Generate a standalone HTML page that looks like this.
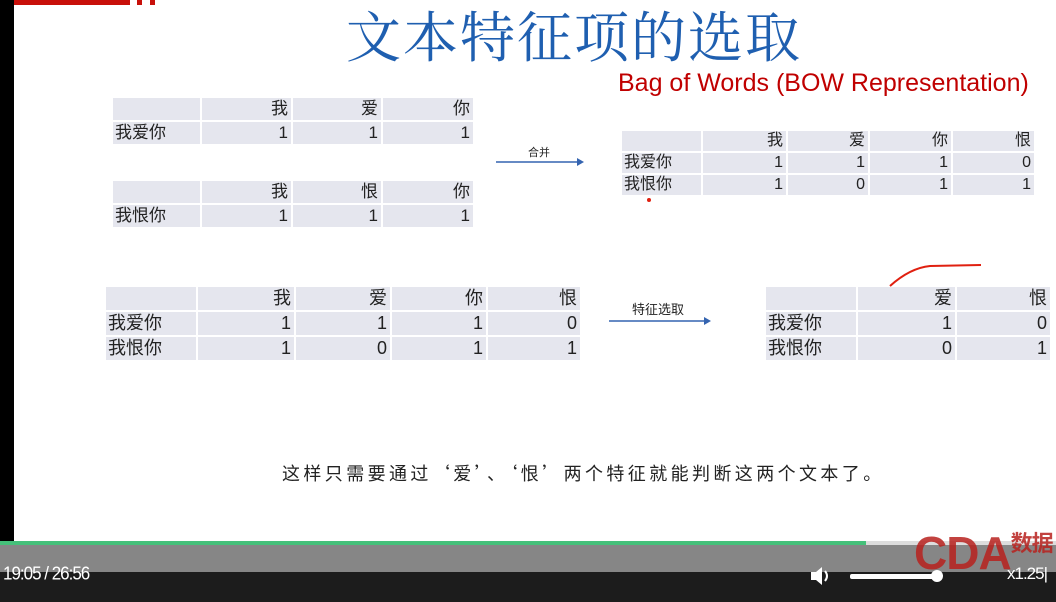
<!DOCTYPE html>
<html><head><meta charset="utf-8"><style>
*{margin:0;padding:0;box-sizing:border-box}
body{width:1056px;height:602px;overflow:hidden;background:#fff;position:relative;font-family:"Liberation Sans","Noto Sans CJK SC",sans-serif}
.a{position:absolute}
.c{position:absolute;background:#e5e6ee;color:#222;font-size:16px;text-align:right;padding-right:3px;white-space:nowrap}
.c.l{text-align:left;padding-left:2px}
</style></head><body>
<div class="a" style="left:0;top:0;width:14px;height:541px;background:#000"></div>
<div class="a" style="left:14px;top:0;width:116px;height:5px;background:#c8100a"></div>
<div class="a" style="left:137px;top:0;width:5px;height:5px;background:#c8100a"></div>
<div class="a" style="left:150px;top:0;width:5px;height:5px;background:#c8100a"></div>
<div class="a" style="left:346px;top:2px;font-family:'Noto Serif CJK SC',serif;font-size:55px;line-height:64px;color:#1f5fb0;white-space:nowrap;letter-spacing:2px">文本特征项的选取</div>
<div class="a" style="left:618px;top:68px;font-size:25px;line-height:30px;color:#c00000;white-space:nowrap;letter-spacing:0px">Bag of Words (BOW Representation)</div>
<div id="t"></div>
<div class="a" style="left:528px;top:144px;font-size:11px;color:#222">合并</div>
<svg class="a" style="left:494px;top:156px" width="92" height="12"><line x1="2" y1="6" x2="84" y2="6" stroke="#3464b0" stroke-width="1.5"/><path d="M83 2 L90 6 L83 10Z" fill="#3464b0"/></svg>
<div class="a" style="left:632px;top:299px;font-size:13px;color:#222">特征选取</div>
<svg class="a" style="left:607px;top:315px" width="106" height="12"><line x1="2" y1="6" x2="98" y2="6" stroke="#3464b0" stroke-width="1.5"/><path d="M97 2 L104 6 L97 10Z" fill="#3464b0"/></svg>
<svg class="a" style="left:885px;top:260px" width="100" height="30"><path d="M5 26 Q25 8 45 6 L96 5" stroke="#e02010" stroke-width="2" fill="none"/></svg>
<div class="a" style="left:647px;top:198px;width:4px;height:4px;border-radius:2px;background:#e02010"></div>
<div class="a" style="left:282px;top:460px;font-family:'Noto Sans CJK SC',sans-serif;font-size:18px;color:#222;white-space:nowrap;letter-spacing:3.4px">这样只需要通过‘爱’、‘恨’两个特征就能判断这两个文本了。</div>
<div class="a" style="left:0;top:541px;width:866px;height:4px;background:#45c07a"></div>
<div class="a" style="left:866px;top:541px;width:190px;height:4px;background:#ddd"></div>
<div class="a" style="left:0;top:545px;width:1056px;height:27px;background:#868686"></div>
<div class="a" style="left:0;top:572px;width:1056px;height:30px;background:#1c1c1c"></div>
<div class="a" style="left:914px;top:526px;font-size:46px;font-weight:bold;color:#b8221e;opacity:.85;letter-spacing:-1px;white-space:nowrap">CDA<span style="font-size:22px;vertical-align:top">数据</span></div>
<div class="a" style="left:3px;top:564px;font-size:17px;color:#fff;letter-spacing:-1px;transform:scaleY(1.1)">19:05 / 26:56</div>
<svg class="a" style="left:808px;top:564px" width="26" height="24"><path d="M3 8 H8 L14 3 V21 L8 16 H3Z" fill="#fff"/><path d="M17 7 Q21 12 17 17" stroke="#fff" stroke-width="2" fill="none"/></svg>
<div class="a" style="left:850px;top:574px;width:87px;height:5px;border-radius:2px;background:#fff"></div>
<div class="a" style="left:931px;top:570px;width:12px;height:12px;border-radius:6px;background:#fff"></div>
<div class="a" style="left:1007px;top:564px;font-size:17px;color:#fff;letter-spacing:-1px;white-space:nowrap">x1.25|</div>
<script>
function tb(cols,rows,data,fs){var h='';for(var r=0;r<rows.length;r++)for(var c=0;c<cols.length;c++){var t=data[r][c];h+='<div class="c'+(c==0?' l':'')+'" style="left:'+cols[c][0]+'px;top:'+rows[r][0]+'px;width:'+(cols[c][1]-cols[c][0])+'px;height:'+(rows[r][1]-rows[r][0])+'px;line-height:'+(rows[r][1]-rows[r][0])+'px;font-size:'+fs+'px">'+t+'</div>';}return h;}
var s='';
var c1=[[113,200],[202,291],[293,381],[383,473]];
s+=tb(c1,[[98,120],[122,144]],[['','我','爱','你'],['我爱你','1','1','1']],17);
s+=tb(c1,[[181,203],[205,227]],[['','我','恨','你'],['我恨你','1','1','1']],17);
s+=tb([[622,701],[703,786],[788,868],[870,951],[953,1034]],[[131,151],[153,173],[175,195]],[['','我','爱','你','恨'],['我爱你','1','1','1','0'],['我恨你','1','0','1','1']],16);
s+=tb([[106,196],[198,294],[296,390],[392,486],[488,580]],[[287,310],[312,335],[337,360]],[['','我','爱','你','恨'],['我爱你','1','1','1','0'],['我恨你','1','0','1','1']],18);
s+=tb([[766,856],[858,955],[957,1050]],[[287,310],[312,335],[337,360]],[['','爱','恨'],['我爱你','1','0'],['我恨你','0','1']],18);
document.getElementById('t').innerHTML=s;
</script>
</body></html>
